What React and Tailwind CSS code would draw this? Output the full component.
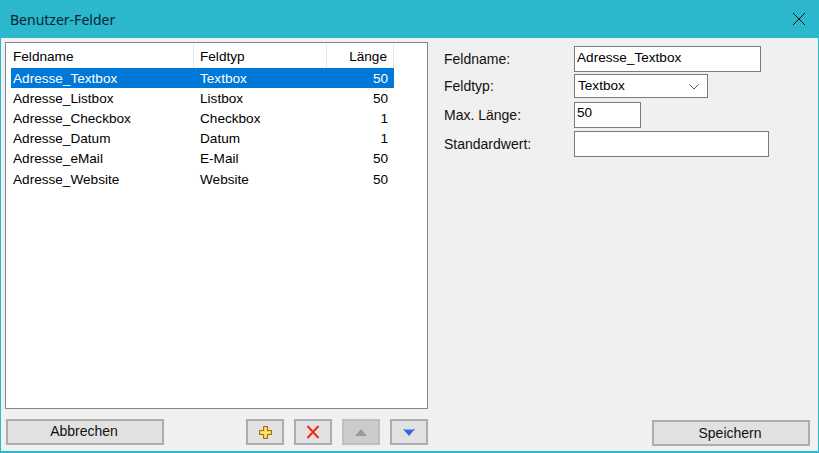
const rows = [
  ["Adresse_Textbox", "Textbox", "50"],
  ["Adresse_Listbox", "Listbox", "50"],
  ["Adresse_Checkbox", "Checkbox", "1"],
  ["Adresse_Datum", "Datum", "1"],
  ["Adresse_eMail", "E-Mail", "50"],
  ["Adresse_Website", "Website", "50"],
];

function IconButton({ disabled, children }) {
  return (
    <button className={`w-[38px] h-[26px] border-2 flex items-center justify-center ${disabled ? "bg-[#cccccc] border-[#bfbfbf]" : "bg-[#e1e1e1] border-[#adadad]"}`}>
      {children}
    </button>
  );
}

function Label({ children, className = "" }) {
  return <div className={`w-[130px] shrink-0 pb-[1px] leading-[16px] text-[#111] ${className}`}>{children}</div>;
}

export default function App() {
  return (
    <div className="w-[819px] h-[453px] bg-[#f0f0f0] flex flex-col border-x border-b-2 border-[#2bb7cc] overflow-hidden font-['Liberation_Sans',Arial,sans-serif] text-[14px] text-black">
      <div className="h-[38px] shrink-0 bg-[#2bb7cc] flex items-center justify-between pl-[9px] pr-[12px]">
        <span className="pt-[1px] text-[14px] text-[#0a2530] font-['Noto_Sans','Liberation_Sans',sans-serif] leading-none">Benutzer-Felder</span>
        <svg width="14" height="14" viewBox="0 0 14 14" fill="none" stroke="#111" strokeWidth="1">
          <path d="M1 1 L13 13 M13 1 L1 13" />
        </svg>
      </div>
      <div className="flex-1 flex min-h-0 pl-[4px] pr-[8px] pt-[4px] pb-[5px]">
        <div className="w-[423px] shrink-0 flex flex-col">
          <div className="h-[367px] bg-white border border-[#828790] pl-[5px] pt-[1px] text-[13.6px]">
            <div className="w-[383px]">
              <div className="flex h-[24px]">
                <div className="w-[183px] pl-[2px] pt-[3px] flex items-center border-r border-[#e5e5e5]">Feldname</div>
                <div className="w-[133px] pl-[6px] pt-[3px] flex items-center border-r border-[#e5e5e5]">Feldtyp</div>
                <div className="w-[67px] pr-[6px] pt-[3px] flex items-center justify-end border-r border-[#e5e5e5]">Länge</div>
              </div>
              {rows.map((r, i) => (
                <div key={r[0]} className={`flex h-[20px] items-center pt-[3px] ${i === 0 ? "bg-[#0078d7] text-white" : ""} ${i === 5 ? "mt-[1px]" : ""}`}>
                  <div className="w-[183px] pl-[2px]">{r[0]}</div>
                  <div className="w-[133px] pl-[6px]">{r[1]}</div>
                  <div className="w-[67px] pr-[6px] text-right">{r[2]}</div>
                </div>
              ))}
            </div>
          </div>
          <div className="flex mt-[10px] pl-[1px] items-center">
            <button className="w-[158px] h-[26px] pr-[2px] pb-[1px] bg-[#e1e1e1] border-2 border-[#adadad] text-[#111]">Abbrechen</button>
            <div className="ml-[82px] flex gap-[10px]">
              <IconButton>
                <svg width="13" height="13" viewBox="0 0 13 13">
                  <path d="M4.5 0.5h4v4h4v4h-4v4h-4v-4h-4v-4h4z" fill="#fdd340" stroke="#9a6a10" strokeWidth="1" />
                  <path d="M6.5 2v9M2 6.5h9" stroke="#ffe98a" strokeWidth="1" />
                </svg>
              </IconButton>
              <IconButton>
                <svg width="14" height="14" viewBox="0 0 14 14" fill="none" stroke="#f5281a" strokeWidth="2">
                  <path d="M1.5 1 L12.5 13 M12.5 1 L1.5 13" />
                </svg>
              </IconButton>
              <IconButton disabled>
                <svg width="12" height="7" viewBox="0 0 12 7">
                  <path d="M6 0 L12 7 H0 Z" fill="#999999" />
                </svg>
              </IconButton>
              <IconButton>
                <svg width="12" height="7" viewBox="0 0 12 7">
                  <path d="M0 0 H12 L6 7 Z" fill="#2f68e0" />
                  <path d="M1.5 0.5 H10.5" stroke="#7fb0f5" strokeWidth="1" />
                </svg>
              </IconButton>
            </div>
          </div>
        </div>
        <div className="flex-1 pl-[16px] pt-[4px] flex flex-col">
          <div className="flex items-center h-[26px]">
            <Label>Feldname:</Label>
            <div className="w-[187px] h-[26px] bg-white border border-[#7a7a7a] pl-[2px] pb-[1px] flex items-center text-[13.6px]">Adresse_Textbox</div>
          </div>
          <div className="flex items-center h-[24px] mt-[2px]">
            <Label>Feldtyp:</Label>
            <div className="w-[134px] h-[24px] bg-white border border-[#7a7a7a] pl-[3px] pr-[8px] flex items-center justify-between text-[13.6px]">
              <span>Textbox</span>
              <svg className="mt-[2px]" width="10" height="6" viewBox="0 0 10 6" fill="none" stroke="#555" strokeWidth="1">
                <path d="M0.5 0.5 L5 5 L9.5 0.5" />
              </svg>
            </div>
          </div>
          <div className="flex items-center h-[26px] mt-[4px]">
            <Label>Max. Länge:</Label>
            <div className="w-[67px] h-[26px] bg-white border border-[#7a7a7a] pl-[2px] pb-[3px] flex items-center text-[13.6px]">50</div>
          </div>
          <div className="flex items-center h-[26px] mt-[3px]">
            <Label>Standardwert:</Label>
            <div className="w-[195px] h-[26px] bg-white border border-[#7a7a7a]" />
          </div>
          <div className="mt-auto flex justify-end">
            <button className="w-[158px] h-[26px] pr-[2px] bg-[#e1e1e1] border-2 border-[#adadad] text-[#111]">Speichern</button>
          </div>
        </div>
      </div>
    </div>
  );
}
